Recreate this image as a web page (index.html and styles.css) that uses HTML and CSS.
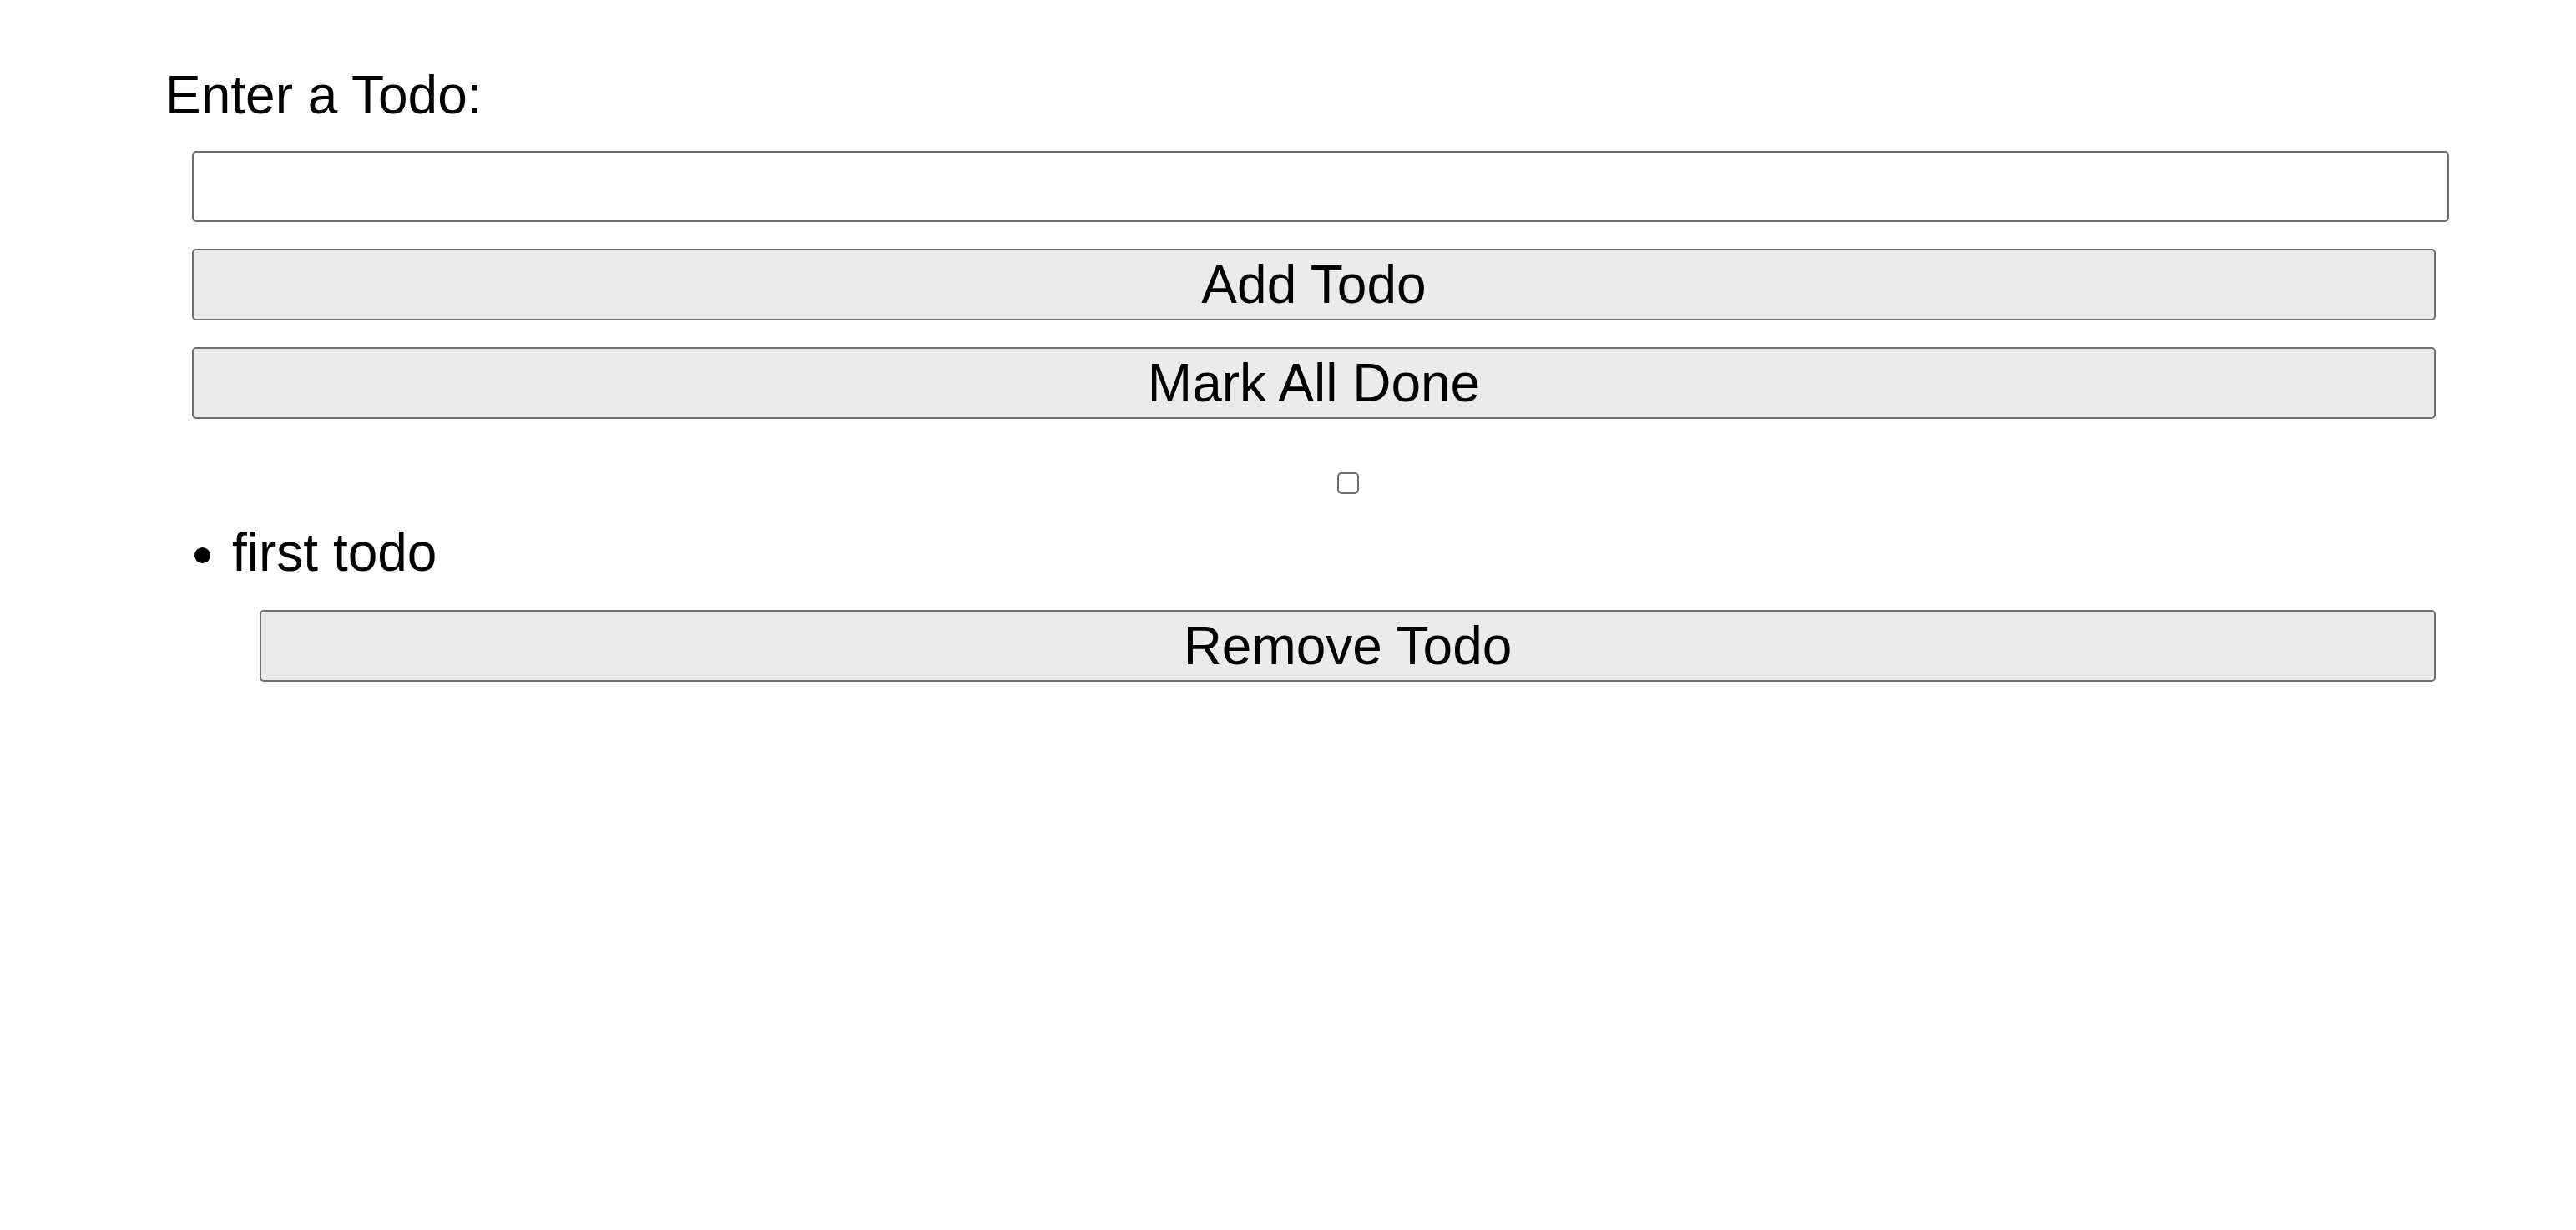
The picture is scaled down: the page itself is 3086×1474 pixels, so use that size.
FILE: index.html
```html
<!DOCTYPE html>
<html lang="en">
<head>
<meta charset="utf-8">
<title>Todo</title>
<link rel="stylesheet" href="styles.css">
</head>
<body>
<div class="app">
  <label class="title" for="todo">Enter a Todo:</label>
  <div class="controls">
    <input class="todo-input" id="todo" type="text">
    <button class="btn">Add Todo</button>
    <button class="btn">Mark All Done</button>
  </div>
  <div class="check-row"><input class="check" type="checkbox"></div>
  <ul class="todo-list">
    <li class="todo-item">
      <span class="todo-text">first todo</span>
      <button class="btn btn-remove">Remove Todo</button>
    </li>
  </ul>
</div>
</body>
</html>
```
FILE: styles.css
```css
html, body {
  margin: 0;
  padding: 0;
  background: #ffffff;
}
body {
  font-family: "Liberation Sans", Arial, Helvetica, sans-serif;
  color: #000;
}
.app {
  padding: 77px 0 0 202px;
  display: flex;
  flex-direction: column;
  align-items: flex-start;
}
.title {
  display: block;
  margin-left: -4px;
  font-size: 64px;
  line-height: 74px;
}
.controls {
  margin: 30px 0 0 28px;
  width: 2688px;
  display: flex;
  flex-direction: column;
  gap: 32px;
}
.todo-input {
  box-sizing: border-box;
  width: calc(100% + 16px);
  height: 85px;
  margin: 0;
  border: 2px solid #6e6e6e;
  border-radius: 5px;
  background: #fff;
  font: inherit;
  font-size: 64px;
  padding: 0 8px;
}
.btn {
  box-sizing: border-box;
  width: 100%;
  height: 86px;
  margin: 0;
  padding: 0;
  border: 2px solid #6e6e6e;
  border-radius: 5px;
  background: #ebebeb;
  color: #000;
  font-family: inherit;
  font-size: 64px;
  line-height: 1;
}
.check-row {
  margin: 64px 0 0 109px;
  width: 2607px;
  display: flex;
  justify-content: center;
}
.check {
  appearance: none;
  -webkit-appearance: none;
  box-sizing: border-box;
  width: 26px;
  height: 26px;
  margin: 0;
  border: 2px solid #6e6e6e;
  border-radius: 5px;
  background: #fff;
}
.todo-list {
  margin: 33px 0 0 0;
  padding: 0 0 0 76px;
  list-style: disc outside;
  font-size: 64px;
  line-height: 74px;
}
.todo-item {
  display: list-item;
}
.todo-text {
  display: block;
}
.btn-remove {
  display: block;
  margin-top: 32px;
  margin-left: 33px;
  width: 2607px;
}
```
